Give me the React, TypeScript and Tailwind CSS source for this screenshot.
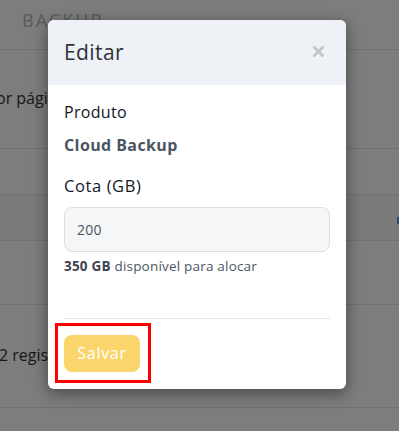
import React from "react";

export default function App() {
  const font = { fontFamily: '"Open Sans", "Noto Sans", sans-serif' };
  return (
    <div className="relative w-[399px] h-[431px] overflow-hidden bg-[#7d7d7d]" style={font}>
      {/* background page (dimmed) */}
      <div className="flex flex-col">
        <div className="h-[50px] flex items-center pl-[22px] border-b border-[#717171]">
          <span className="text-[18px] tracking-[2px] text-[#5a5a5a] -mt-[8px]">BACKUP</span>
        </div>
        <div className="h-[99px] flex items-center border-b border-[#717171]">
          <span className="text-[16px] text-[#161616] -ml-[4px] -mt-[2px]">or página</span>
        </div>
        <div className="h-[46px] border-b border-[#717171]" />
        <div className="h-[46px] border-b border-[#717171] bg-[#797a79] relative">
          <span className="absolute right-0 top-[22px] w-[2px] h-[7px] bg-[#2c4a78]" />
        </div>
        <div className="h-[64px] border-b border-[#717171]" />
        <div className="h-[103px] flex items-center border-b border-[#717171]">
          <span className="text-[16px] text-[#161616] -ml-[1px] mt-[-2px]">2 registros</span>
        </div>
      </div>

      {/* modal */}
      <div className="absolute left-[48px] top-[20px] w-[298px] h-[369px] bg-white rounded-[6px] shadow-[0_4px_16px_rgba(0,0,0,0.45)] flex flex-col overflow-hidden">
        <div className="h-[65px] bg-[#eef1f6] flex items-center justify-between pl-[16px] pr-[22px] shrink-0">
          <span className="text-[21px] tracking-[0.4px] text-[#2f3338] mt-[1px]">Editar</span>
          <svg width="11" height="11" viewBox="0 0 11 11" className="mt-[-2px]">
            <path d="M1.5 1.5 L9.5 9.5 M9.5 1.5 L1.5 9.5" stroke="#c3c5c8" strokeWidth="2.8" strokeLinecap="square" />
          </svg>
        </div>
        <div className="flex flex-col px-[16px] pt-[17px]">
          <span className="text-[16px] tracking-[0.3px] leading-[20px] text-[#111827]">Produto</span>
          <span className="mt-[13px] text-[16px] tracking-[0.4px] leading-[20px] font-bold text-[#4b5563]">Cloud Backup</span>
          <span className="mt-[21px] text-[16.5px] tracking-[0.6px] leading-[20px] text-[#111827]">Cota (GB)</span>
          <div className="mt-[11px] h-[45px] rounded-[8px] border border-[#dedfe2] bg-[#f5f6f8] flex items-center pl-[12px]">
            <span className="text-[14px] tracking-[0.2px] text-[#4b5563]">200</span>
          </div>
          <span className="mt-[6px] text-[13.5px] tracking-[0.2px] leading-[16px] text-[#4b5563]">
            <b className="text-[#3f4550]">350 GB</b> disponível para alocar
          </span>
          <div className="mt-[44px] h-px bg-[#e5e7eb]" />
          <div className="mt-[4px] -ml-[9px] w-[96px] h-[60px] border-[3px] border-[#ff0000] flex items-center pl-[6px]">
            <div className="w-[76px] h-[37px] rounded-[8px] bg-[#fad56c] flex items-center justify-center">
              <span className="text-[16px] tracking-[0.7px] text-white">Salvar</span>
            </div>
          </div>
        </div>
      </div>
    </div>
  );
}
